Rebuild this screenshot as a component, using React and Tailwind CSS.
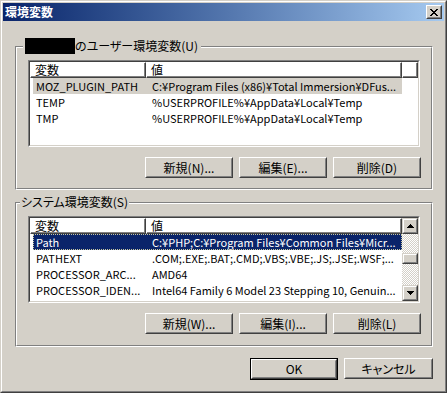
import React from "react";

function Btn({ children, w = "w-[88px]", def = false }) {
  const inner = (
    <div className="h-full border border-t-white border-l-white border-b-[#404040] border-r-[#404040]">
      <div className="h-full border border-t-[#d4d0c8] border-l-[#d4d0c8] border-b-[#808080] border-r-[#808080] flex items-center justify-center leading-none">
        {children}
      </div>
    </div>
  );
  return def ? (
    <div className={`${w} h-[22px] border border-black`}>{inner}</div>
  ) : (
    <div className={`${w} h-[21px]`}>{inner}</div>
  );
}

function HeaderCell({ className, children }) {
  return (
    <div className={`${className} h-[16px] border border-t-white border-l-white border-b-[#404040] border-r-[#404040]`}>
      <div className="h-full border-b border-r border-b-[#808080] border-r-[#808080] pl-[4px] leading-[13px] whitespace-nowrap">
        {children}
      </div>
    </div>
  );
}

function Row({ name, value, sel }) {
  const selCls =
    sel === "focus"
      ? "bg-[#0a246a] text-white outline outline-1 outline-dotted outline-offset-[-1px] outline-[#c8c8a0]"
      : sel === "gray"
      ? "bg-[#d4d0c8] text-black"
      : "text-black";
  return (
    <div className="flex w-[372px] h-[16px] pl-[3px] text-[11px]">
      <div className={`flex flex-1 h-full ${selCls}`}>
        <span className="w-[113px] pl-[3px] overflow-hidden whitespace-nowrap leading-[16px]">{name}</span>
        <span className="flex-1 pl-[6px] overflow-hidden whitespace-nowrap leading-[16px]">{value}</span>
      </div>
    </div>
  );
}

function Arrow({ down }) {
  return (
    <svg width="7" height="4" viewBox="0 0 7 4" shapeRendering="crispEdges" className={down ? "rotate-180" : ""}>
      <path d="M3 0h1v1h1v1h1v1h1v1H0V3h1V2h1V1h1z" fill="#000" />
    </svg>
  );
}

function ScrollBtn({ children }) {
  return (
    <div className="h-[16px] w-[16px] border border-t-[#d4d0c8] border-l-[#d4d0c8] border-b-[#404040] border-r-[#404040]">
      <div className="h-full border border-t-white border-l-white border-b-[#808080] border-r-[#808080] bg-[#d4d0c8] flex items-center justify-center">
        {children}
      </div>
    </div>
  );
}

function ListBox({ rows, scroll }) {
  return (
    <div className="w-[392px] h-[87px] border border-t-[#808080] border-l-[#808080] border-b-white border-r-white">
      <div className="h-full border border-t-[#404040] border-l-[#404040] border-b-[#d4d0c8] border-r-[#d4d0c8] bg-white flex">
        <div className="flex-1 flex flex-col overflow-hidden">
          <div className="flex">
            <HeaderCell className="w-[116px]">変数</HeaderCell>
            <HeaderCell className="w-[256px]">値</HeaderCell>
            {!scroll && <HeaderCell className="flex-1">{""}</HeaderCell>}
          </div>
          {rows.map((r, i) => (
            <Row key={i} {...r} />
          ))}
        </div>
        {scroll && (
          <div className="w-[16px] flex flex-col">
            <ScrollBtn>
              <Arrow />
            </ScrollBtn>
            <div className="flex-1 bg-[repeating-conic-gradient(#d4d0c8_0_25%,#ffffff_0_50%)] [background-size:2px_2px]">
              <div className="mt-[19px]">
                <div className="h-[11px] w-[16px] border border-t-[#d4d0c8] border-l-[#d4d0c8] border-b-[#404040] border-r-[#404040]">
                  <div className="h-full border border-t-white border-l-white border-b-[#808080] border-r-[#808080] bg-[#d4d0c8]" />
                </div>
              </div>
            </div>
            <ScrollBtn>
              <Arrow down />
            </ScrollBtn>
          </div>
        )}
      </div>
    </div>
  );
}

function Group({ caption, captionLeft, pb, children }) {
  return (
    <div className="relative w-[418px] border border-t-[#808080] border-l-[#808080] border-b-white border-r-white">
      <div className={`border border-t-white border-l-white border-b-[#808080] border-r-[#808080] pl-[11px] pt-[12px] ${pb}`}>
        {children}
      </div>
      <div className={`absolute ${captionLeft} top-[-9px] bg-[#d4d0c8] flex items-center leading-[16px] whitespace-nowrap`}>
        {caption}
      </div>
    </div>
  );
}

export default function App() {
  return (
    <div className="w-[447px] h-[393px] border border-t-[#d4d0c8] border-l-[#d4d0c8] border-b-[#404040] border-r-[#404040] text-[12px] text-black font-['Noto_Sans_CJK_JP',sans-serif] [font-feature-settings:'palt']">
      <div className="h-full border border-t-white border-l-white border-b-[#808080] border-r-[#808080] bg-[#d4d0c8] p-px flex flex-col">
        <div className="h-[18px] flex items-center bg-linear-to-r from-[#0a246a] to-[#a6caf0]">
          <span className="pl-[2px] text-white font-bold leading-none">環境変数</span>
          <div className="ml-auto mr-[2px] w-[16px] h-[14px] border border-t-white border-l-white border-b-[#404040] border-r-[#404040]">
            <div className="h-full border border-t-[#d4d0c8] border-l-[#d4d0c8] border-b-[#808080] border-r-[#808080] bg-[#d4d0c8] flex items-center justify-center">
              <svg width="8" height="7" viewBox="0 0 8 7" shapeRendering="crispEdges">
                <path
                  d="M0 0h2v1H0zM6 0h2v1H6zM1 1h2v1H1zM5 1h2v1H5zM2 2h4v1H2zM3 3h2v1H3zM2 4h4v1H2zM1 5h2v1H1zM5 5h2v1H5zM0 6h2v1H0zM6 6h2v1H6z"
                  fill="#000"
                />
              </svg>
            </div>
          </div>
        </div>

        <div className="pl-[12px] pt-[25px] flex flex-col">
          <Group
            captionLeft="left-[7px] pl-[2px] pr-[3px]"
            pb="pb-[10px]"
            caption={
              <>
                <span className="inline-block w-[50px] h-[16px] bg-black" />
                <span>のユーザー環境変数(U)</span>
              </>
            }
          >
            <ListBox
              rows={[
                { name: "MOZ_PLUGIN_PATH", value: "C:¥Program Files (x86)¥Total Immersion¥DFus...", sel: "gray" },
                { name: "TEMP", value: "%USERPROFILE%¥AppData¥Local¥Temp" },
                { name: "TMP", value: "%USERPROFILE%¥AppData¥Local¥Temp" },
              ]}
            />
            <div className="w-[393px] mt-[10px] flex justify-end gap-[6px]">
              <Btn>新規(N)...</Btn>
              <Btn>編集(E)...</Btn>
              <Btn>削除(D)</Btn>
            </div>
          </Group>

          <div className="mt-[12px]">
            <Group captionLeft="left-[4px] px-[1px]" pb="pb-[11px]" caption={<span>システム環境変数(S)</span>}>
              <ListBox
                scroll
                rows={[
                  { name: "Path", value: "C:¥PHP;C:¥Program Files¥Common Files¥Micr...", sel: "focus" },
                  { name: "PATHEXT", value: ".COM;.EXE;.BAT;.CMD;.VBS;.VBE;.JS;.JSE;.WSF;..." },
                  { name: "PROCESSOR_ARC...", value: "AMD64" },
                  { name: "PROCESSOR_IDEN...", value: "Intel64 Family 6 Model 23 Stepping 10, Genuin..." },
                ]}
              />
              <div className="w-[393px] mt-[10px] flex justify-end gap-[6px]">
                <Btn>新規(W)...</Btn>
                <Btn>編集(I)...</Btn>
                <Btn>削除(L)</Btn>
              </div>
            </Group>
          </div>

          <div className="w-[418px] mt-[11px] flex justify-end gap-[6px]">
            <Btn def>OK</Btn>
            <Btn w="w-[89px]">キャンセル</Btn>
          </div>
        </div>
      </div>
    </div>
  );
}
